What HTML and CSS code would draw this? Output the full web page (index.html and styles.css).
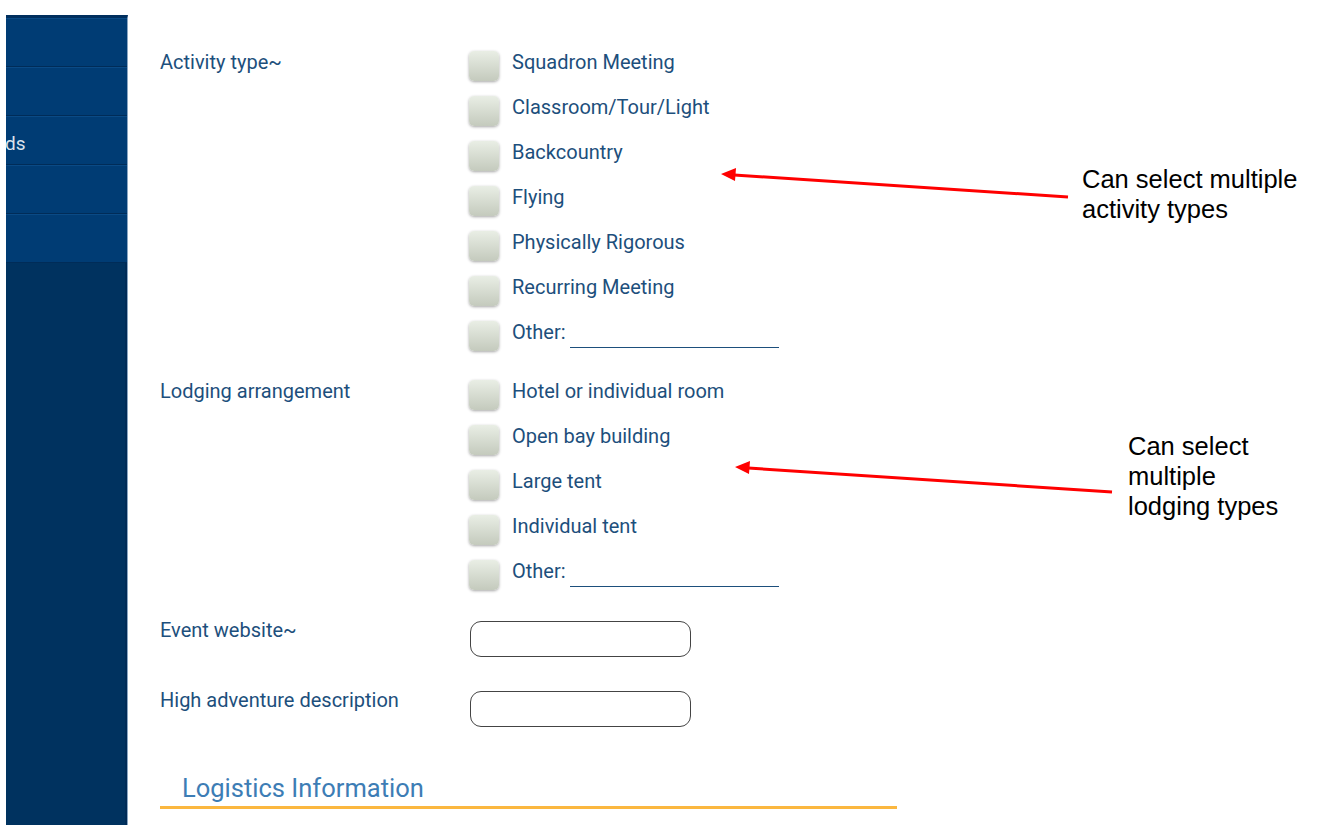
FILE: index.html
```html
<!DOCTYPE html>
<html>
<head>
<meta charset="utf-8">
<link rel="stylesheet" href="styles.css">
</head>
<body>
<div class="page">
  <nav class="sidebar">
    <div class="nav-item"></div>
    <div class="nav-item"></div>
    <div class="nav-item"><span class="nav-text">ds</span></div>
    <div class="nav-item"></div>
    <div class="nav-item"></div>
  </nav>
  <main class="main">
    <div class="field field-options">
      <div class="field-label">Activity type~</div>
      <div class="options">
        <div class="opt"><span class="box"></span><span class="opt-text">Squadron Meeting</span></div>
        <div class="opt"><span class="box"></span><span class="opt-text">Classroom/Tour/Light</span></div>
        <div class="opt"><span class="box"></span><span class="opt-text">Backcountry</span></div>
        <div class="opt"><span class="box"></span><span class="opt-text">Flying</span></div>
        <div class="opt"><span class="box"></span><span class="opt-text">Physically Rigorous</span></div>
        <div class="opt"><span class="box"></span><span class="opt-text">Recurring Meeting</span></div>
        <div class="opt"><span class="box"></span><span class="opt-text">Other:</span><span class="other-line"></span></div>
      </div>
    </div>
    <div class="field field-options">
      <div class="field-label">Lodging arrangement</div>
      <div class="options">
        <div class="opt"><span class="box"></span><span class="opt-text">Hotel or individual room</span></div>
        <div class="opt"><span class="box"></span><span class="opt-text">Open bay building</span></div>
        <div class="opt"><span class="box"></span><span class="opt-text">Large tent</span></div>
        <div class="opt"><span class="box"></span><span class="opt-text">Individual tent</span></div>
        <div class="opt"><span class="box"></span><span class="opt-text">Other:</span><span class="other-line"></span></div>
      </div>
    </div>
    <div class="field field-input">
      <div class="field-label">Event website~</div>
      <div class="text-input"></div>
    </div>
    <div class="field field-input">
      <div class="field-label">High adventure description</div>
      <div class="text-input"></div>
    </div>
    <h2 class="section-title">Logistics Information</h2>
  </main>
</div>

<div class="note note-activity">Can select multiple activity types</div>
<div class="note note-lodging">Can select multiple lodging types</div>
<svg class="arrows" width="1339" height="834" viewBox="0 0 1339 834">
  <line x1="1068" y1="197" x2="734" y2="175" stroke="#ff0000" stroke-width="3"/>
  <polygon points="721,174 736,168 735,181" fill="#ff0000"/>
  <line x1="1112" y1="492" x2="748" y2="468" stroke="#ff0000" stroke-width="3"/>
  <polygon points="735,467 750,461 749,474" fill="#ff0000"/>
</svg>
</body>
</html>
```
FILE: styles.css
```css
html, body {
  margin: 0;
  padding: 0;
  background: #ffffff;
}
body {
  font-family: Roboto, "Noto Sans", sans-serif;
  position: relative;
  width: 1339px;
  height: 834px;
  overflow: hidden;
}
.page {
  display: flex;
  align-items: flex-start;
  padding: 15px 0 0 6px;
}
.sidebar {
  width: 122px;
  height: 810px;
  background: #00325f;
  border-right: 1px solid #8aa6c2;
  box-shadow: inset -2px 0 0 #002b56;
  border-top: 3px solid #002f5e;
  box-sizing: border-box;
  flex-shrink: 0;
}
.nav-item {
  height: 49px;
  background: #003c74;
  border-top: 1px solid #0a4a85;
  border-bottom: 1px solid #002c58;
  box-sizing: border-box;
  display: flex;
  align-items: center;
}
.nav-text {
  color: #dbe3ec;
  font-size: 19px;
  margin-left: -1px;
  padding-top: 5px;
}
.main {
  padding: 35px 0 0 32px;
  color: #1d4f7c;
}
.field {
  display: flex;
  align-items: flex-start;
}
.field-options {
  margin-bottom: 28px;
}
.field-input {
  margin-bottom: 31px;
}
.field-label {
  width: 309px;
  font-size: 20px;
  line-height: 24px;
}
.options {
  display: flex;
  flex-direction: column;
  gap: 14px;
}
.opt {
  display: flex;
  align-items: flex-start;
  height: 31px;
}
.box {
  width: 30px;
  height: 30px;
  margin-top: 1px;
  border-radius: 5px;
  background: linear-gradient(#e9eee5, #c4cabd);
  box-shadow: 0 1px 3px rgba(0, 0, 0, 0.35);
  flex-shrink: 0;
}
.opt-text {
  margin-left: 13px;
  font-size: 20px;
  line-height: 24px;
}
.other-line {
  width: 209px;
  height: 27px;
  margin-left: 4px;
  border-bottom: 1.5px solid #1d4f7c;
}
.text-input {
  width: 221px;
  height: 36px;
  margin-top: 3px;
  margin-left: 1px;
  border: 1.5px solid #444444;
  border-radius: 11px;
  box-sizing: border-box;
}
.section-title {
  margin: 46px 0 0 0;
  width: 737px;
  padding: 0 0 3px 22px;
  box-sizing: border-box;
  border-bottom: 3px solid #fbb73f;
  font-weight: 400;
  font-size: 25.5px;
  line-height: 30px;
  color: #3d7db5;
}
.note {
  position: absolute;
  font-family: "Liberation Sans", Arial, sans-serif;
  font-size: 25.5px;
  line-height: 30px;
  color: #000000;
}
.note-activity {
  left: 1082px;
  top: 164px;
  width: 236px;
}
.note-lodging {
  left: 1128px;
  top: 431px;
  width: 165px;
}
.arrows {
  position: absolute;
  left: 0;
  top: 0;
  pointer-events: none;
}
```
